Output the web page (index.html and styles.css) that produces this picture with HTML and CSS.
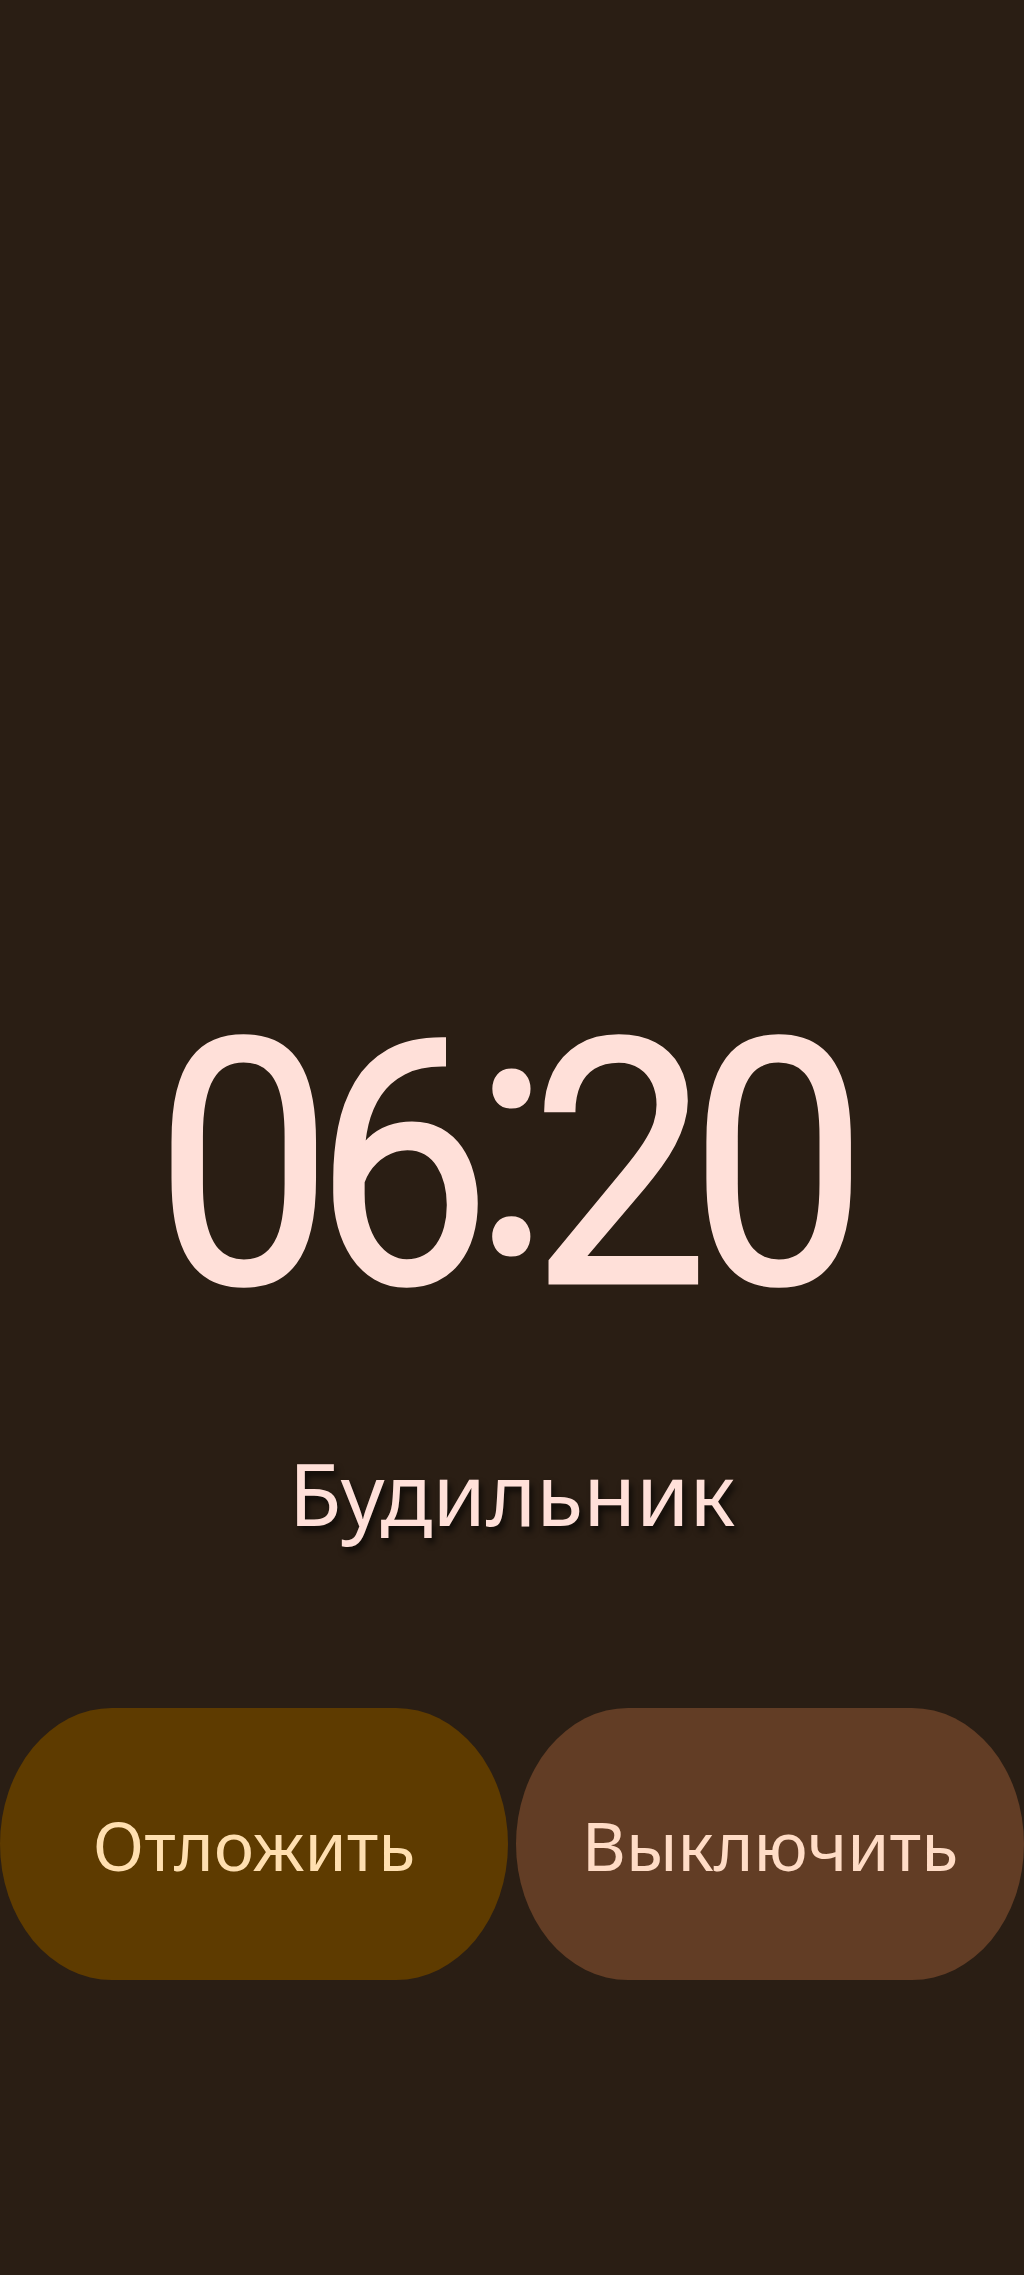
FILE: index.html
```html
<!DOCTYPE html>
<html lang="ru">
<head>
<meta charset="utf-8">
<title>Будильник</title>
<link rel="stylesheet" href="styles.css">
</head>
<body>
<main class="screen">
  <div class="time">06<span class="sep">:</span>20</div>
  <div class="label">Будильник</div>
  <div class="actions">
    <button class="btn btn-snooze">Отложить</button>
    <button class="btn btn-dismiss">Выключить</button>
  </div>
</main>
</body>
</html>
```

FILE: styles.css
```css
html, body {
  margin: 0;
  padding: 0;
  background: #2a1e14;
}
.screen {
  height: 2275px;
  display: flex;
  flex-direction: column;
  align-items: center;
  box-sizing: border-box;
  padding-top: 995px;
  font-family: "Noto Sans", "DejaVu Sans", sans-serif;
}
.time {
  font-family: Roboto, "Noto Sans", sans-serif;
  font-size: 343px;
  line-height: 1;
  letter-spacing: -20px;
  margin-right: 20px;
  color: #ffe0d9;
  -webkit-text-stroke: 3px #ffe0d9;
  font-weight: 400;
  transform: scaleX(0.92);
  white-space: nowrap;
}
.sep {
  display: inline-block;
  transform: translateY(-30px);
}
.label {
  margin-top: 112px;
  font-size: 86px;
  line-height: 1;
  color: #ffe0d9;
  text-shadow: 3px 5px 6px rgba(0, 0, 0, 0.65);
}
.actions {
  margin-top: 172px;
  width: 100%;
  display: flex;
  gap: 8px;
}
.btn {
  flex: 1;
  height: 272px;
  border: none;
  border-radius: 112px / 136px;
  font-family: "Noto Sans", "DejaVu Sans", sans-serif;
  font-size: 68px;
  padding: 0;
}
.btn-snooze {
  background: #5e3b00;
  color: #ffdfb0;
}
.btn-dismiss {
  background: #623d25;
  color: #ffdcc6;
}
```
